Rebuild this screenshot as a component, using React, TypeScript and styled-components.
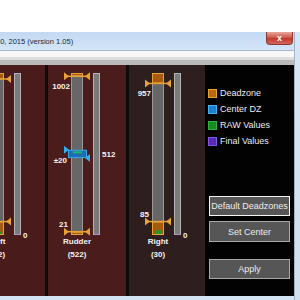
import React from 'react';
import styled, { createGlobalStyle } from 'styled-components';

const GlobalStyle = createGlobalStyle`
  html, body { margin: 0; padding: 0; background: #fff; width: 300px; height: 300px; overflow: hidden; }
  body { font-family: "Liberation Sans", Arial, sans-serif; }
`;

const Screen = styled.div`
  width: 300px;
  height: 300px;
  display: flex;
  flex-direction: column;
`;

const Desktop = styled.div`
  height: 32px;
  flex: none;
  background: #fff;
`;

const Window = styled.div`
  flex: 1;
  min-height: 0;
  display: grid;
  grid-template-columns: 294px 6px;
`;

const MainCol = styled.div`
  display: flex;
  flex-direction: column;
  min-width: 0;
  overflow: hidden;
`;

const Frame = styled.div`
  background: linear-gradient(#d6e6f6, #cfdff0);
  border-left: 1px solid #9fb2c6;
`;

const TitleBar = styled.div`
  height: 18px;
  flex: none;
  display: flex;
  align-items: center;
  justify-content: space-between;
  background: linear-gradient(#c2d9f1, #d4e6f8);
  border-bottom: 1px solid #a9b9c9;
  padding-right: 1px;
`;

const TitleText = styled.span`
  font-size: 7.5px;
  color: #1d2a3a;
  white-space: nowrap;
  margin-left: -4px;
`;

const CloseBtn = styled.div`
  width: 27px;
  height: 13px;
  align-self: flex-start;
  box-sizing: border-box;
  border: 1px solid #8a3a32;
  border-top: none;
  border-radius: 0 0 4px 4px;
  background: linear-gradient(#e8a89e, #cf5a4f 45%, #c0392e 55%, #d4675c);
  color: #fff;
  font-size: 9px;
  font-weight: bold;
  display: flex;
  align-items: center;
  justify-content: center;
`;

const MenuBand = styled.div`
  height: 6px;
  flex: none;
  background: #f8f8f8;
`;

const ToolStrip = styled.div`
  height: 8px;
  flex: none;
  background: linear-gradient(#dedede 0 3px, #bababa 3px);
`;

const Content = styled.div`
  flex: 1;
  min-height: 0;
  display: flex;
  overflow: hidden;
  background: #000;
`;

const BottomStrip = styled.div`
  height: 4px;
  flex: none;
  background: #d3e4f5;
`;

const AxisPanel = styled.div<{ $w: number; $bg: string; $offset?: number }>`
  width: ${(p) => p.$w}px;
  flex: none;
  margin-left: ${(p) => p.$offset ?? 0}px;
  background: ${(p) => p.$bg};
  display: flex;
  flex-direction: column;
`;

const Divider = styled.div`
  width: 3px;
  flex: none;
  background: #0c0c0c;
`;

const GaugeSvg = styled.svg`
  display: block;
  overflow: visible;
  flex: none;
`;

const Caption = styled.div<{ $center: number }>`
  width: ${(p) => p.$center * 2}px;
  text-align: center;
  font-size: 8px;
  font-weight: bold;
  line-height: 12.5px;
  color: #f2f2f2;
  white-space: nowrap;
  display: flex;
  flex-direction: column;
  align-items: center;
`;

const SidePanel = styled.div`
  flex: 1;
  background: #020202;
  display: flex;
  flex-direction: column;
  padding: 20px 0 0 3px;
`;

const LegendItem = styled.div`
  height: 16px;
  display: flex;
  align-items: center;
  gap: 3px;
  font-size: 9px;
  color: #ececec;
  white-space: nowrap;
`;

const Swatch = styled.span<{ $fill: string; $edge: string }>`
  width: 9px;
  height: 9px;
  box-sizing: border-box;
  background: ${(p) => p.$fill};
  border: 1px solid ${(p) => p.$edge};
`;

const Button = styled.div<{ $focus?: boolean; $gap: number; $h: number }>`
  margin: ${(p) => p.$gap}px 0 0 1px;
  width: 81px;
  height: ${(p) => p.$h}px;
  box-sizing: border-box;
  background: #565656;
  border: 1px solid ${(p) => (p.$focus ? '#f4f4f4' : '#a8a8a8')};
  color: #ececec;
  font-size: 9px;
  display: flex;
  align-items: center;
  justify-content: center;
  white-space: nowrap;
`;

const H = 171;
const TOP = 8;
const BOT = 170;
const vy = (v: number) => BOT - (v / 1023) * (BOT - TOP);

const MX = 23;
const MW = 12;
const TX = 45;
const TW = 7;
const ORANGE = '#e6a23a';
const TXT = {
  fill: '#f4f4f4',
  fontSize: 8,
  fontWeight: 'bold' as const,
  fontFamily: '"Liberation Sans", Arial, sans-serif',
};

function Bracket({ y }: { y: number }) {
  return (
    <g>
      <line x1={17} x2={41} y1={y} y2={y} stroke={ORANGE} strokeWidth={1.5} />
      <polygon points={`16,${y - 4} 16,${y + 4} 21,${y}`} fill={ORANGE} />
      <polygon points={`42,${y - 4} 42,${y + 4} 37,${y}`} fill={ORANGE} />
    </g>
  );
}

type GaugeProps = {
  w: number;
  top: number;
  bottom: number;
  raw: number;
  center?: number;
  final: string;
  finalAt: number;
  labels?: boolean;
};

function Gauge({ w, top, bottom, raw, center, final, finalAt, labels = true }: GaugeProps) {
  const yT = vy(top);
  const yB = vy(bottom);
  const yR = vy(raw);
  return (
    <GaugeSvg width={w} height={H} viewBox={`0 0 ${w} ${H}`}>
      <rect x={MX + 0.5} y={TOP + 0.5} width={MW - 1} height={BOT - TOP - 1} fill="#676767" stroke="#999" />
      <rect x={TX + 0.5} y={TOP + 0.5} width={TW - 1} height={BOT - TOP - 1} fill="#7b7b7b" stroke="#b3b3b3" />
      <line x1={TX + 1} x2={TX + TW - 1} y1={BOT - 0.5} y2={BOT - 0.5} stroke="#a58fd8" />

      <rect x={MX + 0.5} y={TOP + 0.5} width={MW - 1} height={Math.max(yT - TOP - 1, 1)} fill="#a65a0c" stroke={ORANGE} />
      <Bracket y={yT} />
      {labels && <text x={MX - 1} y={yT + 13} textAnchor="end" {...TXT}>{top}</text>}

      <rect x={MX + 0.5} y={yB + 0.5} width={MW - 1} height={Math.max(BOT - yB - 1, 1)} fill="#a65a0c" stroke={ORANGE} />
      {center === undefined && raw < 512 && (
        <rect x={MX + 3} y={yR} width={MW - 6} height={BOT - 1 - yR} fill="#1f9a2c" />
      )}
      <Bracket y={yB} />
      {labels && <text x={MX - 3} y={yB - 5} textAnchor="end" {...TXT}>{bottom}</text>}

      {center !== undefined && (() => {
        const y1 = vy(512 + center) - 1;
        const y2 = vy(512 - center) + 1;
        return (
          <g>
            <rect x={20.5} y={y1 + 0.5} width={18} height={y2 - y1 - 1} fill="#1b6fae" stroke="#3aa9e8" />
            <rect x={25} y={yR - 1} width={9} height={2} fill="#22b46a" />
            <polygon points={`16,${y1 - 4} 16,${y1 + 4} 21,${y1}`} fill="#3aa9e8" />
            <polygon points={`42,${y2 - 4} 42,${y2 + 4} 37,${y2}`} fill="#3aa9e8" />
            {labels && <text x={MX - 4} y={y2 + 5} textAnchor="end" {...TXT}>{`±${center}`}</text>}
          </g>
        );
      })()}

      <text x={TX + TW + 2} y={vy(finalAt) + 3} {...TXT}>{final}</text>
    </GaugeSvg>
  );
}

type Axis = {
  name: string;
  value: number;
  w: number;
  bg: string;
  offset?: number;
  gauge: Omit<GaugeProps, 'w'>;
};

const axes: Axis[] = [
  { name: 'Left', value: 22, w: 76, bg: '#4a1b1b', offset: -31, gauge: { top: 985, bottom: 85, raw: 22, final: '0', finalAt: 0, labels: false } },
  { name: 'Rudder', value: 522, w: 78, bg: '#4a1c1c', gauge: { top: 1002, bottom: 21, raw: 522, center: 20, final: '512', finalAt: 512 } },
  { name: 'Right', value: 30, w: 76, bg: '#2e1e1e', gauge: { top: 957, bottom: 85, raw: 30, final: '0', finalAt: 0 } },
];

const legend = [
  { label: 'Deadzone', fill: '#b8680e', edge: '#e6a23a' },
  { label: 'Center DZ', fill: '#1c82d0', edge: '#48b0f0' },
  { label: 'RAW Values', fill: '#138a22', edge: '#32b042' },
  { label: 'Final Values', fill: '#5a28b8', edge: '#8058e0' },
];

export default function App() {
  return (
    <Screen>
      <GlobalStyle />
      <Desktop />
      <Window>
        <MainCol>
          <TitleBar>
            <TitleText>30, 2015 (version 1.05)</TitleText>
            <CloseBtn>x</CloseBtn>
          </TitleBar>
          <MenuBand />
          <ToolStrip />
          <Content>
            {axes.map((a, i) => (
              <React.Fragment key={a.name}>
                {i > 0 && <Divider />}
                <AxisPanel $w={a.w} $bg={a.bg} $offset={a.offset}>
                  <Gauge w={a.w} {...a.gauge} />
                  <Caption $center={MX + MW / 2}>
                    <span>{a.name}</span>
                    <span>({a.value})</span>
                  </Caption>
                </AxisPanel>
              </React.Fragment>
            ))}
            <SidePanel>
              {legend.map((l) => (
                <LegendItem key={l.label}>
                  <Swatch $fill={l.fill} $edge={l.edge} />
                  {l.label}
                </LegendItem>
              ))}
              <Button $focus $gap={47} $h={20}>Default Deadzones</Button>
              <Button $gap={5} $h={21}>Set Center</Button>
              <Button $gap={17} $h={20}>Apply</Button>
            </SidePanel>
          </Content>
          <BottomStrip />
        </MainCol>
        <Frame />
      </Window>
    </Screen>
  );
}
